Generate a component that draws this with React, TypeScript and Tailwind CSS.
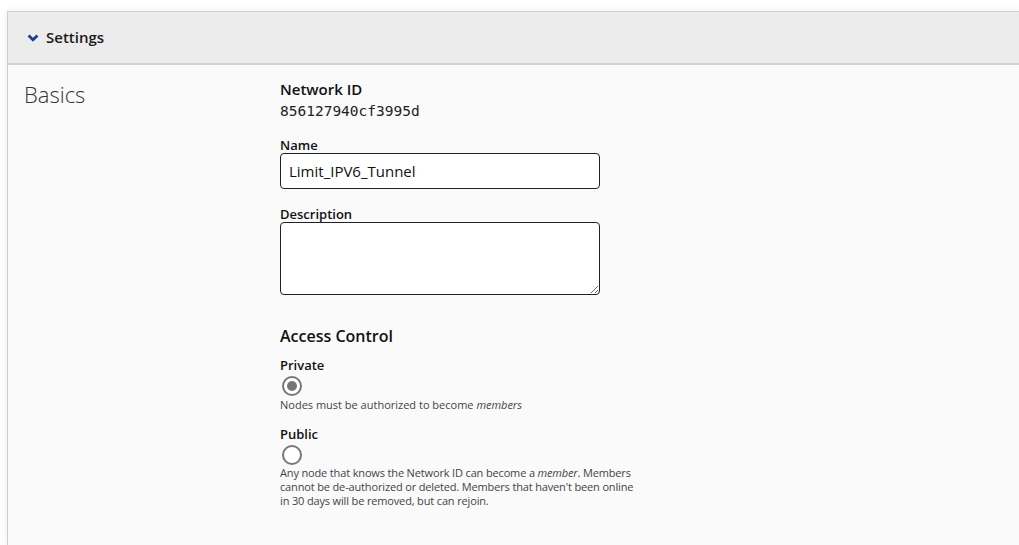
import * as React from "react";

const font = { fontFamily: '"Open Sans", "Noto Sans", sans-serif' };

function Field({ label, children }: { label: string; children: React.ReactNode }) {
  return (
    <div className="flex flex-col">
      <label className="text-[13px] leading-[16px] font-semibold text-[#111]">{label}</label>
      {children}
    </div>
  );
}

function Radio({ checked }: { checked?: boolean }) {
  return (
    <span className="mt-[2px] ml-[2px] flex size-[20px] items-center justify-center rounded-full border-2 border-[#777] bg-white">
      {checked && <span className="size-[10px] rounded-full bg-[#777]" />}
    </span>
  );
}

export default function App() {
  return (
    <div className="min-h-[545px] bg-white pt-[11px] pl-[7px]" style={font}>
      <section className="min-h-[534px] border-t border-l border-[#cfcfcf] bg-[#fafafa] shadow-[0_0_8px_rgba(0,0,0,0.08)]">
        <header className="flex h-[53px] items-center gap-[7px] border-b-2 border-[#d2d2d2] bg-[#ececec] pl-[19px]">
          <svg width="12" height="8" viewBox="0 0 12 8" aria-hidden="true">
            <path d="M1.6 1.6 L6 5.8 L10.4 1.6" fill="none" stroke="#1c3f94" strokeWidth="2.8" />
          </svg>
          <h2 className="text-[15px] font-semibold text-[#1a1a1a]">Settings</h2>
        </header>

        <div className="flex pt-[14px]">
          <h3 className="w-[272px] pl-[16px] text-[22px] leading-[30px] font-light text-[#333]">Basics</h3>

          <div className="flex w-[380px] flex-col">
            <div className="text-[15px] leading-[20px] font-semibold text-[#111]">Network ID</div>
            <div
              className="mt-[3px] text-[14.5px] leading-[18px] text-[#222]"
              style={{ fontFamily: '"DejaVu Sans Mono", "Liberation Mono", monospace' }}
            >
              856127940cf3995d
            </div>

            <div className="mt-[17px]">
              <Field label="Name">
                <input
                  readOnly
                  value="Limit_IPV6_Tunnel"
                  className="h-[36px] w-[320px] rounded-[4px] border border-[#222] bg-white px-[8px] text-[15px] text-[#111] outline-none"
                  style={font}
                />
              </Field>
            </div>

            <div className="mt-[17px]">
              <Field label="Description">
                <textarea className="h-[73px] w-[320px] rounded-[4px] border border-[#222] bg-white px-[8px] outline-none" />
              </Field>
            </div>

            <div className="mt-[30px] text-[16px] leading-[22px] font-semibold text-[#111]">Access Control</div>

            <div className="mt-[10px] flex flex-col">
              <span className="text-[13px] leading-[17px] font-semibold text-[#111]">Private</span>
              <Radio checked />
              <p className="mt-[1px] text-[11px] leading-[15px] text-[#444]">
                Nodes must be authorized to become <em>members</em>
              </p>
            </div>

            <div className="mt-[14px] flex flex-col">
              <span className="text-[13px] leading-[17px] font-semibold text-[#111]">Public</span>
              <Radio />
              <p className="mt-[1px] text-[11px] leading-[14px] tracking-[-0.15px] whitespace-nowrap text-[#444]">
                Any node that knows the Network ID can become a <em>member</em>. Members
                <br />
                cannot be de-authorized or deleted. Members that haven't been online
                <br />
                in 30 days will be removed, but can rejoin.
              </p>
            </div>
          </div>
        </div>
      </section>
    </div>
  );
}
